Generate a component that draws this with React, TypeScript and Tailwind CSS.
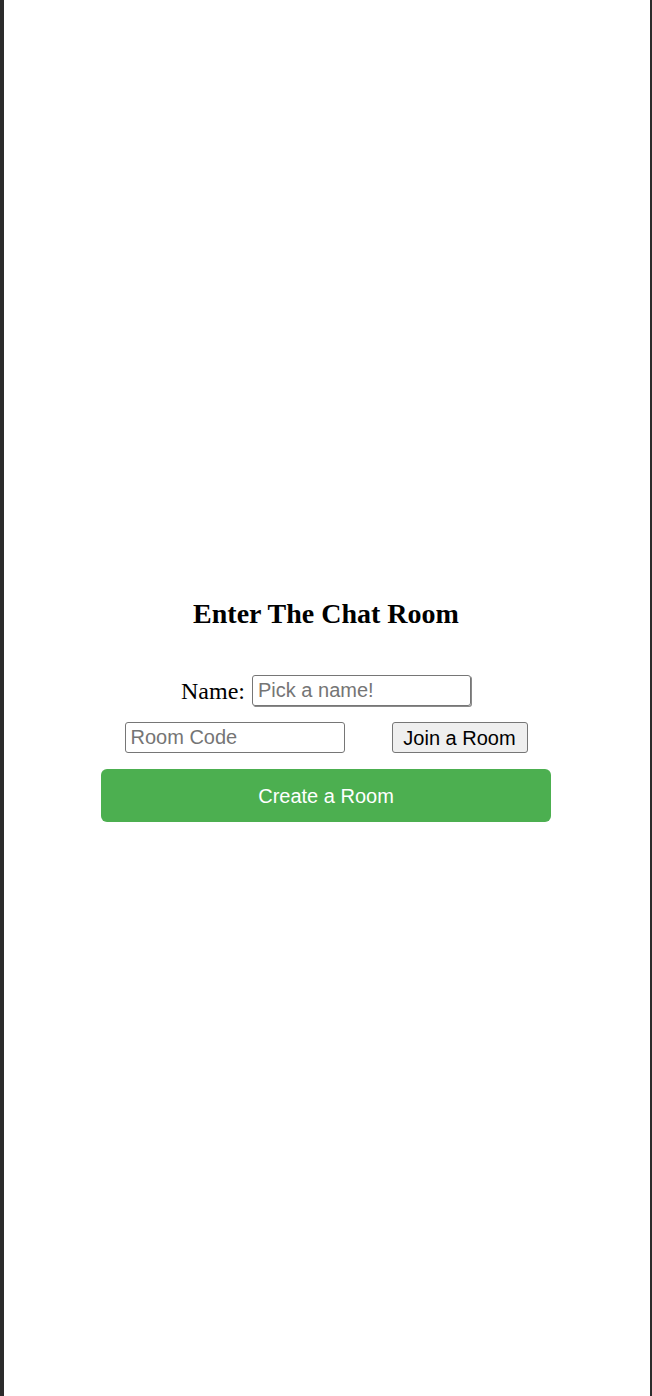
export default function App() {
  return (
    <div className="flex h-[1396px] w-full bg-[#2b2b2b]">
      <div className="ml-[4px] mr-[2px] flex flex-1 flex-col items-center bg-white pt-[598px] pr-[2px]">
        <h3 className="text-[28px] leading-[32px] font-bold text-black [font-family:'Liberation_Serif',serif]">
          Enter The Chat Room
        </h3>

        <div className="mt-[45px] flex h-[31px] items-center gap-[7px]">
          <label className="text-[24px] leading-none text-black [font-family:'Liberation_Serif',serif]">Name:</label>
          <input
            type="text"
            placeholder="Pick a name!"
            className="h-[31px] w-[219px] rounded-[3px] border border-[#767676] px-[5px] text-[20px] text-black shadow-[1px_1px_0_#8a8a8a] outline-none placeholder:text-[#757575] [font-family:'Liberation_Sans',sans-serif]"
          />
        </div>

        <div className="mt-[16px] flex items-center gap-[47px]">
          <input
            type="text"
            placeholder="Room Code"
            className="h-[31px] w-[220px] rounded-[3px] border border-[#767676] px-[5px] text-[20px] text-black outline-none placeholder:text-[#757575] [font-family:'Liberation_Sans',sans-serif]"
          />
          <button className="h-[31px] w-[136px] rounded-[3px] border border-[#767676] bg-[#efefef] text-[20px] leading-none text-black [font-family:'Liberation_Sans',sans-serif]">
            Join a Room
          </button>
        </div>

        <button className="mt-[16px] h-[53px] w-[450px] rounded-[6px] bg-[#4caf50] text-[20px] text-white [font-family:'Liberation_Sans',sans-serif]">
          Create a Room
        </button>
      </div>
    </div>
  );
}
